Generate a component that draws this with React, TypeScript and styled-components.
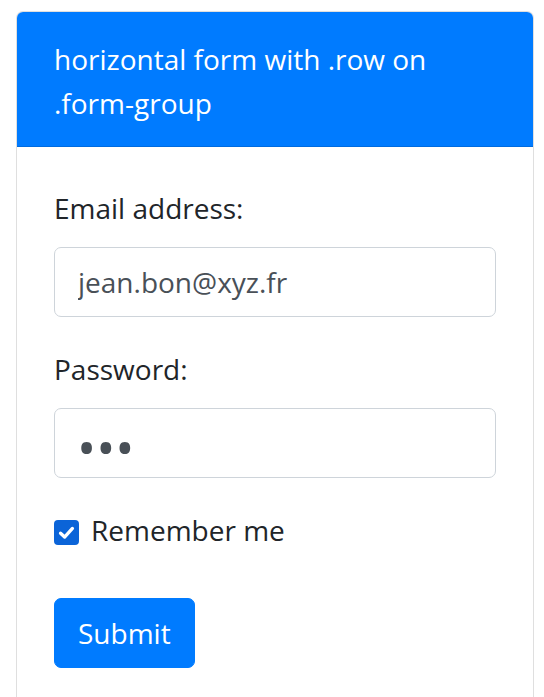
import React from "react";
import styled, { createGlobalStyle } from "styled-components";

const GlobalStyle = createGlobalStyle`
  html, body {
    margin: 0;
    padding: 0;
    background: #ffffff;
  }
  body {
    font-family: "Open Sans", "Noto Sans", "Liberation Sans", sans-serif;
    color: #212529;
    -webkit-font-smoothing: antialiased;
  }
  * { box-sizing: border-box; }
`;

const Page = styled.div`
  padding: 11px 0 0 16px;
`;

const Card = styled.div`
  width: 518px;
  border: 1px solid rgba(0, 0, 0, 0.125);
  border-radius: 7px;
  background: #fff;
  overflow: hidden;
`;

const CardHeader = styled.div`
  background: #007bff;
  color: #fff;
  padding: 25px 37px 21px;
  font-size: 28px;
  line-height: 44px;
  border-bottom: 1px solid rgba(0, 0, 0, 0.125);
`;

const CardBody = styled.form`
  padding: 39px 37px 37px;
  display: flex;
  flex-direction: column;
`;

const FormGroup = styled.div`
  display: flex;
  flex-direction: column;
  margin-bottom: 30px;
`;

const Label = styled.label`
  display: block;
  font-size: 28px;
  line-height: 44px;
  margin-bottom: 17px;
  color: #212529;
`;

const Input = styled.input`
  display: block;
  width: 100%;
  height: 70px;
  padding: 0 23px;
  font-family: inherit;
  font-size: 28px;
  color: #495057;
  background: #fff;
  border: 1px solid #ced4da;
  border-radius: 7px;
  outline: none;
`;

const PasswordInput = styled(Input)`
  padding: 7px 22px 0;
  font-size: 51px;
  letter-spacing: 0;
  color: #495057;
  -webkit-text-security: disc;
`;

const CheckRow = styled.label`
  display: flex;
  align-items: center;
  gap: 12px;
  margin-bottom: 46px;
  font-size: 28px;
  line-height: 44px;
  color: #212529;
`;

const CheckBox = styled.span`
  display: inline-flex;
  align-items: center;
  justify-content: center;
  width: 25px;
  height: 25px;
  border-radius: 4px;
  background: #0b64d8;
  margin-top: 5px;
  flex: none;
`;

const SubmitButton = styled.button`
  align-self: flex-start;
  height: 70px;
  padding: 0 23px;
  font-family: inherit;
  font-size: 28px;
  color: #fff;
  background: #007bff;
  border: 1px solid #007bff;
  border-radius: 7px;
  cursor: pointer;
`;

export default function App() {
  return (
    <>
      <GlobalStyle />
      <Page>
        <Card>
          <CardHeader>horizontal form with .row on .form-group</CardHeader>
          <CardBody onSubmit={(e) => e.preventDefault()}>
            <FormGroup>
              <Label htmlFor="email">Email address:</Label>
              <Input id="email" type="email" defaultValue="jean.bon@xyz.fr" />
            </FormGroup>
            <FormGroup>
              <Label htmlFor="pwd">Password:</Label>
              <PasswordInput id="pwd" type="password" defaultValue="abc" />
            </FormGroup>
            <CheckRow>
              <CheckBox>
                <svg width="19" height="19" viewBox="0 0 16 16" fill="none">
                  <path
                    d="M3 8.6 L6.4 11.8 L13 4.6"
                    stroke="#fff"
                    strokeWidth="2.8"
                    strokeLinecap="round"
                    strokeLinejoin="round"
                  />
                </svg>
              </CheckBox>
              Remember me
            </CheckRow>
            <SubmitButton type="submit">Submit</SubmitButton>
          </CardBody>
        </Card>
      </Page>
    </>
  );
}
